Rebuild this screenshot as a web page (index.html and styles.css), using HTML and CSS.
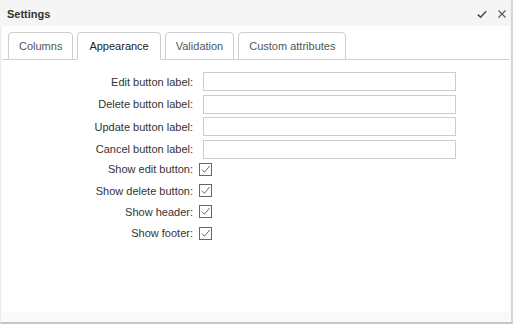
FILE: index.html
```html
<!DOCTYPE html>
<html>
<head>
<meta charset="utf-8">
<link rel="stylesheet" href="styles.css">
</head>
<body>
<div class="panel">
  <div class="header">
    <span class="title">Settings</span>
    <div class="actions">
      <svg class="ico" width="10" height="9" viewBox="0 0 10 9"><path d="M0.8 4.6 L3.6 7.3 L9.2 1.2" fill="none" stroke="#4a4a4a" stroke-width="1.5"/></svg>
      <svg class="ico" width="8" height="8" viewBox="0 0 8 8"><path d="M0.5 0.5 L7.5 7.5 M7.5 0.5 L0.5 7.5" fill="none" stroke="#555" stroke-width="1.1"/></svg>
    </div>
  </div>
  <div class="content">
    <div class="tabs">
      <div class="tab">Columns</div>
      <div class="tab active">Appearance</div>
      <div class="tab">Validation</div>
      <div class="tab">Custom attributes</div>
    </div>
    <div class="form">
      <label class="lbl">Edit button label:</label><div class="field"><span class="input"></span></div>
      <label class="lbl">Delete button label:</label><div class="field"><span class="input"></span></div>
      <label class="lbl">Update button label:</label><div class="field"><span class="input"></span></div>
      <label class="lbl">Cancel button label:</label><div class="field"><span class="input"></span></div>
    </div>
    <div class="form checks">
      <label class="lbl">Show edit button:</label><div class="field"><span class="cb"><svg width="11" height="11" viewBox="0 0 11 11"><path d="M1.8 5.6 L4.4 8.3 L9.6 2" fill="none" stroke="#5a5a5a" stroke-width="0.9"/></svg></span></div>
      <label class="lbl">Show delete button:</label><div class="field"><span class="cb"><svg width="11" height="11" viewBox="0 0 11 11"><path d="M1.8 5.6 L4.4 8.3 L9.6 2" fill="none" stroke="#5a5a5a" stroke-width="0.9"/></svg></span></div>
      <label class="lbl">Show header:</label><div class="field"><span class="cb"><svg width="11" height="11" viewBox="0 0 11 11"><path d="M1.8 5.6 L4.4 8.3 L9.6 2" fill="none" stroke="#5a5a5a" stroke-width="0.9"/></svg></span></div>
      <label class="lbl">Show footer:</label><div class="field"><span class="cb"><svg width="11" height="11" viewBox="0 0 11 11"><path d="M1.8 5.6 L4.4 8.3 L9.6 2" fill="none" stroke="#5a5a5a" stroke-width="0.9"/></svg></span></div>
    </div>
  </div>
  <div class="footer"></div>
</div>
</body>
</html>
```

FILE: styles.css
```css
html, body {
  margin: 0;
  padding: 0;
  background: #fff;
}
body {
  font-family: "Liberation Sans", Arial, sans-serif;
  font-size: 11px;
  color: #333;
}
.panel {
  width: 510px;
  height: 322px;
  display: flex;
  flex-direction: column;
  border-left: 1px solid #ececec;
  border-right: 2px solid #d6d6d6;
  border-bottom: 2px solid #c6c6c6;
  background: #f9f9f9;
}
.header {
  height: 26px;
  flex: none;
  display: flex;
  align-items: center;
  justify-content: space-between;
  background: #f5f5f5;
  padding: 0 5px 0 7px;
  margin-left: -1px;
}
.title {
  font-weight: bold;
  color: #333;
  font-size: 11px;
  padding-top: 2px;
}
.actions {
  display: flex;
  align-items: center;
  gap: 11px;
  padding-top: 2px;
}
.ico { display: block; }
.content {
  flex: 1;
  background: #fff;
  margin: 0 2px 0 1px;
}
.tabs {
  display: flex;
  gap: 4px;
  padding: 6px 0 0 6px;
  border-bottom: 1px solid #cfcfcf;
  height: 27px;
}
.tab {
  box-sizing: border-box;
  height: 28px;
  padding: 0 10px;
  border: 1px solid #cfcfcf;
  border-radius: 4px 4px 0 0;
  display: flex;
  align-items: center;
  color: #555;
  font-size: 11px;
  background: #fff;
}
.tab.active {
  color: #222;
  border-bottom-color: #fff;
  padding: 0 11px;
}
.form {
  display: grid;
  grid-template-columns: 191px 257px;
  column-gap: 6px;
  row-gap: 3.6px;
  padding-top: 12px;
  align-items: center;
}
.form.checks {
  row-gap: 8.3px;
  padding-top: 4px;
}
.lbl {
  text-align: right;
  color: #333;
  white-space: nowrap;
}
.field { display: flex; align-items: center; }
.input {
  display: block;
  box-sizing: border-box;
  width: 253px;
  height: 19px;
  margin-left: 4px;
  border: 1px solid #cdcdcd;
  background: #fff;
}
.cb {
  box-sizing: border-box;
  width: 13px;
  height: 13px;
  border: 1px solid #666;
  display: flex;
  align-items: center;
  justify-content: center;
  background: #fff;
}
.cb svg { display: block; }
.footer {
  height: 10px;
  flex: none;
  background: #f9f9f9;
}
```
